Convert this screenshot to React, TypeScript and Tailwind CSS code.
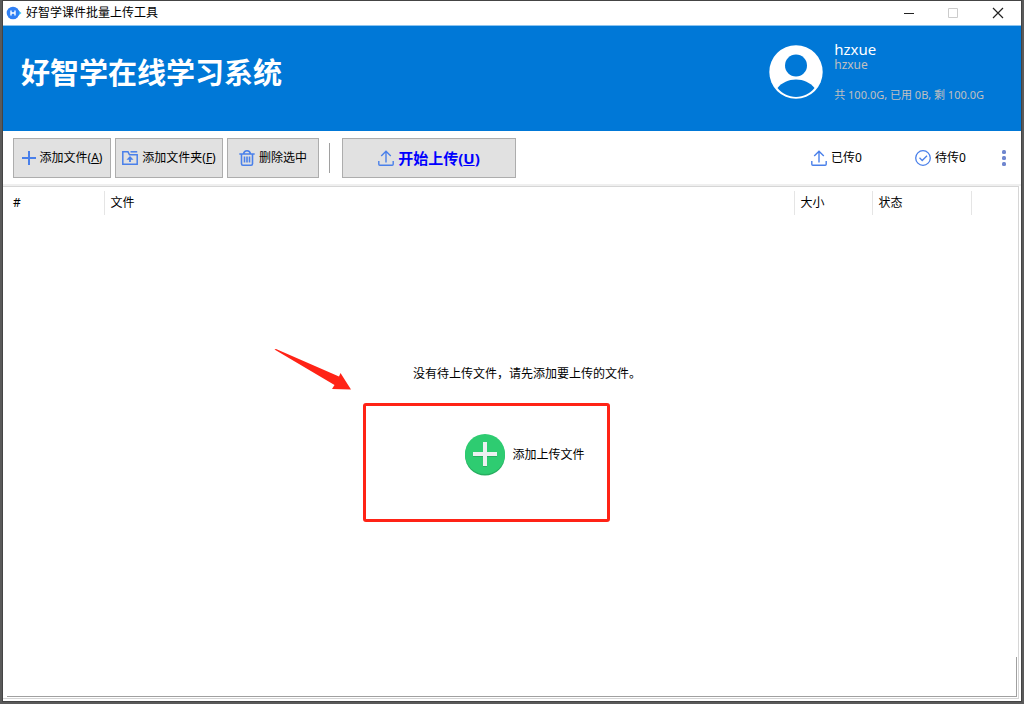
import type { ReactNode } from 'react';
import clsx from 'clsx';

const columns: { label: string; width: string }[] = [
  { label: '#', width: 'w-[101px]' },
  { label: '文件', width: '' },
  { label: '大小', width: 'w-[78px]' },
  { label: '状态', width: 'w-[99px]' },
  { label: '', width: 'w-[46px]' },
];

function AppIcon() {
  return (
    <svg width="16" height="14" viewBox="0 0 16 14" aria-hidden="true">
      <path d="M10 2.5 15.5 7 10 11.5Z" fill="#35c8f5" />
      <circle cx="7" cy="7" r="6.3" fill="#2f80f5" />
      <path d="M5 4.5v5M9 4.5v5M5 7h4" stroke="#fff" strokeWidth="1.4" fill="none" />
    </svg>
  );
}

function Avatar() {
  return (
    <svg width="54" height="54" viewBox="0 0 54 54" aria-hidden="true">
      <circle cx="27" cy="27" r="26.7" fill="#fff" />
      <circle cx="27" cy="20.5" r="11" fill="#0078d7" />
      <path d="M8.5 43C13 37.5 19.5 34.5 27 34.5S41 37.5 45.5 43C41 48.5 34.5 52 27 52S13 48.5 8.5 43Z" fill="#0078d7" />
    </svg>
  );
}

function PlusIcon() {
  return (
    <svg width="14" height="14" viewBox="0 0 14 14" stroke="#4a80ea" strokeWidth="2" aria-hidden="true">
      <path d="M7 0v14M0 7h14" />
    </svg>
  );
}

function FolderIcon() {
  return (
    <svg width="16" height="14" viewBox="0 0 16 14" fill="none" stroke="#4a80ea" strokeWidth="1.5" aria-hidden="true">
      <path d="M.8 13.2V.8H6l1.5 3h7.7v9.4Z" />
      <path d="M8.5.8h6.7" />
      <path d="M8 11V7" strokeWidth="1.8" />
      <path d="M8 5 11.5 8.8H4.5Z" fill="#4a80ea" stroke="none" />
    </svg>
  );
}

function TrashIcon() {
  return (
    <svg width="16" height="16" viewBox="0 0 16 16" fill="none" stroke="#4a80ea" strokeWidth="1.6" aria-hidden="true">
      <path d="M.3 4h15.4M4.5 4c.3-2 1.7-3.2 3.5-3.2S11.2 2 11.5 4" />
      <path d="M2.5 4v9.7c0 .9.5 1.5 1.4 1.5h8.2c.9 0 1.4-.6 1.4-1.5V4" />
      <path d="M5.5 6.5v6M8 6.5v6M10.5 6.5v6" />
    </svg>
  );
}

function UploadIcon() {
  return (
    <svg width="16" height="16" viewBox="0 0 16 16" fill="none" stroke="#4a80ea" strokeWidth="1.4" aria-hidden="true">
      <path d="M8 12.5V1.2M3.2 6 8 1.2 12.8 6" />
      <path d="M.8 11v3.2c0 .6.4 1 1 1h12.4c.6 0 1-.4 1-1V11" />
    </svg>
  );
}

function CheckIcon() {
  return (
    <svg width="16" height="16" viewBox="0 0 16 16" fill="none" stroke="#4a80ea" strokeWidth="1.3" aria-hidden="true">
      <circle cx="8" cy="8" r="7.3" />
      <path d="m4.5 7.8 2.7 2.7 4.8-4.8" />
    </svg>
  );
}

function AddCircleIcon() {
  return (
    <svg width="40" height="42" viewBox="0 0 40 42" aria-hidden="true">
      <circle cx="20" cy="21.5" r="20" fill="#27ae60" />
      <circle cx="20" cy="20" r="20" fill="#2ecc71" />
      <path d="M18 10h4v9h10v4H22v10h-4V23H8v-4h10Z" fill="#27ae60" />
      <path d="M18 8h4v10h10v4H22v10h-4V22H8v-4h10Z" fill="#ecf0f1" />
    </svg>
  );
}

function ToolButton({ children, className }: { children: ReactNode; className?: string }) {
  return (
    <button
      type="button"
      className={clsx('flex h-10 items-center justify-center border border-[#adadad] bg-[#e1e1e1] whitespace-nowrap', className)}
    >
      {children}
    </button>
  );
}

export default function App() {
  return (
    <div className="flex min-h-screen flex-col bg-[#5a5a5a] px-[3px] pt-px pb-[3px] font-['Noto_Sans','Noto_Sans_CJK_SC',sans-serif] text-xs text-black">
      <div className="flex flex-1 flex-col bg-white outline outline-[#444]">
        <div className="flex h-[25px] items-center border-b border-[#8cc4ef] pl-[3px]">
          <AppIcon />
          <span className="ml-1 flex-1">好智学课件批量上传工具</span>
          <button type="button" aria-label="最小化" className="flex h-6 w-11 items-center justify-center">
            <svg width="10" height="10" viewBox="0 0 10 10" stroke="#222"><path d="M0 5.5h10" /></svg>
          </button>
          <button type="button" aria-label="最大化" className="flex h-6 w-11 items-center justify-center">
            <svg width="10" height="10" viewBox="0 0 10 10" stroke="#ccc" fill="none"><path d="M.5.5h9v9h-9Z" /></svg>
          </button>
          <button type="button" aria-label="关闭" className="flex h-6 w-[46px] items-center justify-center">
            <svg width="12" height="12" viewBox="0 0 12 12" stroke="#222" strokeWidth="1.2"><path d="m1 1 10 10M11 1 1 11" /></svg>
          </button>
        </div>

        <header className="flex h-[105px] bg-[#0078d7] pr-9 pl-[18px] text-white">
          <h1 className="flex-1 pt-[27px] text-[29px] leading-10 font-bold">好智学在线学习系统</h1>
          <div className="flex gap-[11px] pt-[19px]">
            <Avatar />
            <div className="-mt-1 pr-px text-[#c0c0c0]">
              <div className="text-[15px] leading-4 text-white">hzxue</div>
              <div className="text-xs leading-4">hzxue</div>
              <div className="mt-3 text-[11px] leading-5">共 100.0G, 已用 0B, 剩 100.0G</div>
            </div>
          </div>
        </header>

        <div className="flex h-[55px] items-center gap-1 border-b-2 border-[#efefef] pr-3 pl-[10px]">
          <ToolButton className="w-[98px] gap-1">
            <PlusIcon />
            <span>添加文件(<u>A</u>)</span>
          </ToolButton>
          <ToolButton className="w-[108px] gap-1">
            <FolderIcon />
            <span>添加文件夹(<u>F</u>)</span>
          </ToolButton>
          <ToolButton className="w-[92px] gap-1">
            <TrashIcon />
            <span>删除选中</span>
          </ToolButton>
          <div className="mr-2 ml-[6px] h-[30px] w-px bg-[#a0a0a0]" />
          <ToolButton className="w-[174px] gap-1 text-[15px] font-bold text-[#0000ff]">
            <UploadIcon />
            <span>开始上传(<u>U</u>)</span>
          </ToolButton>
          <div className="ml-auto flex items-center">
            <button type="button" className="flex w-[104px] items-center gap-1">
              <UploadIcon />
              <span>已传0</span>
            </button>
            <button type="button" className="flex w-[84px] items-center gap-1">
              <CheckIcon />
              <span>待传0</span>
            </button>
            <button type="button" aria-label="更多">
              <svg width="10" height="16" viewBox="0 0 10 16" fill="#6f86cf">
                <rect x="3" y="0" width="4" height="4" rx="1.5" />
                <rect x="3" y="6" width="4" height="4" rx="1.5" />
                <rect x="3" y="12" width="4" height="4" rx="1.5" />
              </svg>
            </button>
          </div>
        </div>

        <main className="mr-[2px] mb-[2px] flex flex-1 flex-col border-t border-r border-b border-[#d6d6d6] pr-px pb-px">
          <table className="mt-1 w-full table-fixed">
            <thead>
              <tr>
                {columns.map((c, i) => (
                  <th
                    key={i}
                    scope="col"
                    className={clsx('h-6 border-[#e5e5e5] text-left font-normal', c.width, c.label === '#' ? 'pl-[10px]' : 'pl-[6px]', c.label && 'border-r')}
                  >
                    {c.label}
                  </th>
                ))}
              </tr>
            </thead>
            <tbody />
          </table>

          <div className="flex flex-1 flex-col items-center pt-[149px] pl-[30px]">
            <p className="pl-1 leading-5">没有待上传文件，请先添加要上传的文件。</p>
            <div className="relative mt-[50px]">
              <button type="button" className="flex items-center gap-[7px]">
                <AddCircleIcon />
                <span>添加上传文件</span>
              </button>
              <div className="pointer-events-none absolute -top-[31px] -left-[102px] h-[119px] w-[247px] rounded-[3px] border-3 border-[#ff2316]" />
              <svg className="pointer-events-none absolute -top-[86px] -left-[191px]" width="78" height="43" viewBox="0 0 78 43" aria-hidden="true">
                <path d="M.5 1.5 2 1 65 28.5 66.5 25 77 41.5 58 41 60.5 37Z" fill="#ff2316" />
              </svg>
            </div>
          </div>
          <div className="ml-1 h-10 border-r border-b border-[#a0a0a0]" />
        </main>
      </div>
    </div>
  );
}
